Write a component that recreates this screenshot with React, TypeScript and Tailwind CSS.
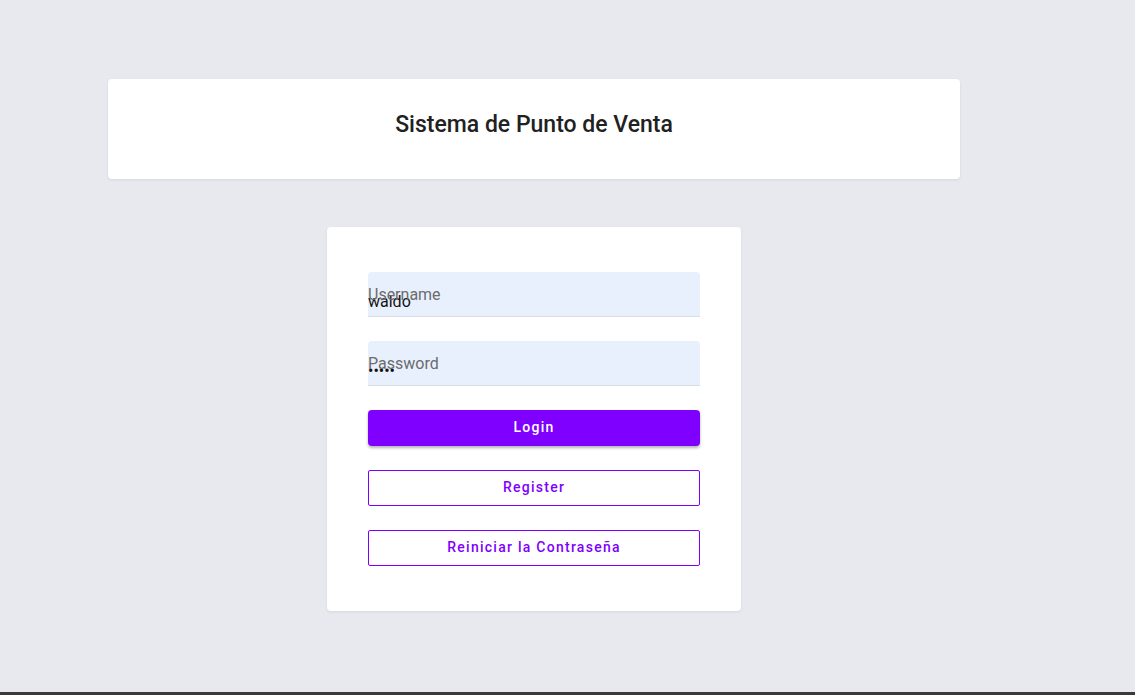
import React from "react";

function Field({ label, value, type }: { label: string; value: string; type: string }) {
  return (
    <div className="relative h-[45px] w-full rounded-t-[4px] border-b border-[#d9dde6] bg-[#e8f0fe]">
      <span className="pointer-events-none absolute left-0 top-[14px] text-[16px] leading-[18px] text-[#6b6b6b]">
        {label}
      </span>
      <input
        type={type}
        value={value}
        readOnly
        className="h-full w-full bg-transparent pt-[15px] text-[16px] leading-[18px] text-[#111] outline-none"
      />
    </div>
  );
}

export default function App() {
  return (
    <div
      className="flex min-h-screen flex-col bg-[#e8e9ef]"
      style={{ fontFamily: "Roboto, 'Noto Sans', sans-serif" }}
    >
      <div className="flex-1 pl-[108px] pt-[79px]">
        <div className="flex w-[852px] flex-col items-center gap-[48px]">
          <div className="flex h-[100px] w-full justify-center rounded-[4px] bg-white pt-[32px] shadow-[0_1px_3px_rgba(0,0,0,0.08)]">
            <h1 className="text-[23px] font-medium leading-[27px] text-[#212121]">Sistema de Punto de Venta</h1>
          </div>
          <div className="flex w-[414px] flex-col gap-[24px] rounded-[4px] bg-white px-[41px] py-[45px] shadow-[0_1px_3px_rgba(0,0,0,0.08)]">
            <Field label="Username" value="waldo" type="text" />
            <Field label="Password" value="waldo" type="password" />
            <button className="h-[36px] w-full rounded-[4px] bg-[#8000ff] pb-[2px] text-[14px] font-medium tracking-[0.09em] text-white shadow-[0_2px_3px_rgba(0,0,0,0.3)]">
              Login
            </button>
            <button className="h-[36px] w-full rounded-[2px] border border-[#8000ff] bg-white pb-[2px] text-[14px] font-medium tracking-[0.09em] text-[#8000ff]">
              Register
            </button>
            <button className="h-[36px] w-full rounded-[2px] border border-[#8000ff] bg-white pb-[2px] text-[14px] font-medium tracking-[0.09em] text-[#8000ff]">
              Reiniciar la Contraseña
            </button>
          </div>
        </div>
      </div>
      <div className="h-[3px] bg-[#3a3a3a]" />
    </div>
  );
}
